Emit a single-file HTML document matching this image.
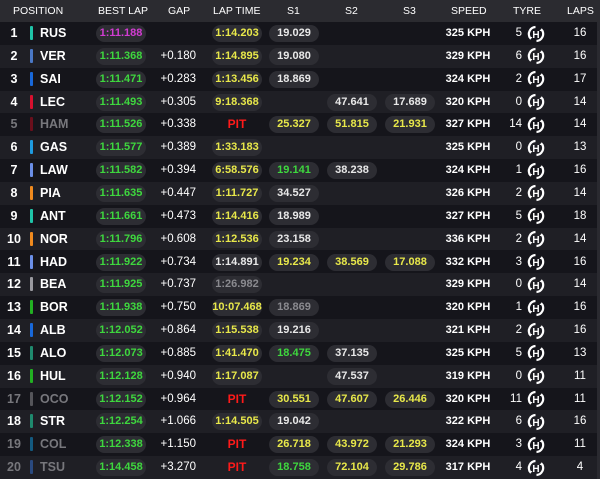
<!DOCTYPE html>
<html><head><meta charset="utf-8"><style>
*{margin:0;padding:0;box-sizing:border-box}
body{width:600px;height:479px;background:#15151b;overflow:hidden;font-family:"Liberation Sans",sans-serif;color:#fff;position:relative}
.h{position:absolute;top:0;left:0;width:600px;height:22px;background:#2b2b30;font-size:10.5px}
.h span{position:absolute;top:5px}
.r{position:absolute;left:0;width:597px;height:22.85px;font-size:11px;font-weight:bold}
.r:nth-child(even){background:#1f1f25}
.r:nth-child(odd){background:#15151b}
.r span{position:absolute;top:5px;line-height:13px}
.p{left:2px;width:24px;text-align:center;font-size:12.5px}
.b{left:30px;top:4px!important;width:3px;height:14px;border-radius:1px}
.c{left:40px;font-size:12.5px}
.pl{height:17px;top:3px!important;line-height:17px!important;width:50px;border-radius:8.5px;background:#2d2d33;text-align:center;font-size:11px}
.bl{left:96px}.lt{left:212px}.s1{left:269px}.s2{left:327px}.s3{left:385px}
.gp{left:148px;width:48px;text-align:right;font-weight:normal;font-size:11.5px}
.sp{left:440px;width:56px;text-align:center}
.ty{left:500px;width:22px;text-align:right;font-weight:normal;font-size:11.5px}
.lp{left:566px;width:28px;text-align:center;font-weight:normal;font-size:11.5px}
.g{color:#3ed73e}.y{color:#e8e84a}.pu{color:#d23cd2}.w{color:#e8e8e8}.gr{color:#8a8a8f}
.pit{color:#ff1a1a;background:none!important;font-size:12px!important}
.d .p,.d .c{color:#77777c}
.sb{position:absolute;right:0;top:22px;width:3px;height:457px;background:#2a2a30}
svg.i{position:absolute;left:527px;top:2.5px}
</style></head><body>
<svg width="0" height="0" style="position:absolute"><defs><symbol id="t" viewBox="0 0 18 18"><path d="M8.5 2A7 7 0 0 0 3 12.8" fill="none" stroke="#fff" stroke-width="2.2"/><path d="M9.5 16A7 7 0 0 0 15 5.2" fill="none" stroke="#fff" stroke-width="2.2"/><path d="M1 11.8l2.2 3 2.3-2.7z M17 6.2l-2.2-3-2.3 2.7z" fill="#fff"/><text x="9" y="12.8" text-anchor="middle" font-family="Liberation Sans" font-weight="bold" font-size="10" fill="#fff">H</text></symbol></defs></svg>
<div class="h"><span style="left:13px">POSITION</span><span style="left:98px">BEST LAP</span><span style="left:168px">GAP</span><span style="left:213px">LAP TIME</span><span style="left:287px">S1</span><span style="left:345px">S2</span><span style="left:403px">S3</span><span style="left:451px">SPEED</span><span style="left:513px">TYRE</span><span style="left:567px">LAPS</span></div>
<div id="rows">
<div class="r" style="top:22px"><span class="p">1</span><span class="b" style="background:#1fc4a8"></span><span class="c">RUS</span><span class="pl bl pu">1:11.188</span><span class="gp"></span><span class="pl lt y">1:14.203</span><span class="pl s1 w">19.029</span><span class="sp">325 KPH</span><span class="ty">5</span><svg class="i" width="18" height="18"><use href="#t"/></svg><span class="lp">16</span></div>
<div class="r" style="top:44.85px"><span class="p">2</span><span class="b" style="background:#4a78c6"></span><span class="c">VER</span><span class="pl bl g">1:11.368</span><span class="gp">+0.180</span><span class="pl lt y">1:14.895</span><span class="pl s1 w">19.080</span><span class="sp">329 KPH</span><span class="ty">6</span><svg class="i" width="18" height="18"><use href="#t"/></svg><span class="lp">16</span></div>
<div class="r" style="top:67.7px"><span class="p">3</span><span class="b" style="background:#1868db"></span><span class="c">SAI</span><span class="pl bl g">1:11.471</span><span class="gp">+0.283</span><span class="pl lt y">1:13.456</span><span class="pl s1 w">18.869</span><span class="sp">324 KPH</span><span class="ty">2</span><svg class="i" width="18" height="18"><use href="#t"/></svg><span class="lp">17</span></div>
<div class="r" style="top:90.55px"><span class="p">4</span><span class="b" style="background:#d8102e"></span><span class="c">LEC</span><span class="pl bl g">1:11.493</span><span class="gp">+0.305</span><span class="pl lt y">9:18.368</span><span class="pl s2 w">47.641</span><span class="pl s3 w">17.689</span><span class="sp">320 KPH</span><span class="ty">0</span><svg class="i" width="18" height="18"><use href="#t"/></svg><span class="lp">14</span></div>
<div class="r d" style="top:113.4px"><span class="p">5</span><span class="b" style="background:#6a0f1c"></span><span class="c">HAM</span><span class="pl bl g">1:11.526</span><span class="gp">+0.338</span><span class="pl lt pit">PIT</span><span class="pl s1 y">25.327</span><span class="pl s2 y">51.815</span><span class="pl s3 y">21.931</span><span class="sp">327 KPH</span><span class="ty">14</span><svg class="i" width="18" height="18"><use href="#t"/></svg><span class="lp">14</span></div>
<div class="r" style="top:136.25px"><span class="p">6</span><span class="b" style="background:#1e9be0"></span><span class="c">GAS</span><span class="pl bl g">1:11.577</span><span class="gp">+0.389</span><span class="pl lt y">1:33.183</span><span class="sp">325 KPH</span><span class="ty">0</span><svg class="i" width="18" height="18"><use href="#t"/></svg><span class="lp">13</span></div>
<div class="r" style="top:159.1px"><span class="p">7</span><span class="b" style="background:#6b8fe8"></span><span class="c">LAW</span><span class="pl bl g">1:11.582</span><span class="gp">+0.394</span><span class="pl lt y">6:58.576</span><span class="pl s1 g">19.141</span><span class="pl s2 w">38.238</span><span class="sp">324 KPH</span><span class="ty">1</span><svg class="i" width="18" height="18"><use href="#t"/></svg><span class="lp">16</span></div>
<div class="r" style="top:181.95px"><span class="p">8</span><span class="b" style="background:#f08a1e"></span><span class="c">PIA</span><span class="pl bl g">1:11.635</span><span class="gp">+0.447</span><span class="pl lt y">1:11.727</span><span class="pl s1 w">34.527</span><span class="sp">326 KPH</span><span class="ty">2</span><svg class="i" width="18" height="18"><use href="#t"/></svg><span class="lp">14</span></div>
<div class="r" style="top:204.8px"><span class="p">9</span><span class="b" style="background:#1fc4a8"></span><span class="c">ANT</span><span class="pl bl g">1:11.661</span><span class="gp">+0.473</span><span class="pl lt y">1:14.416</span><span class="pl s1 w">18.989</span><span class="sp">327 KPH</span><span class="ty">5</span><svg class="i" width="18" height="18"><use href="#t"/></svg><span class="lp">18</span></div>
<div class="r" style="top:227.65px"><span class="p">10</span><span class="b" style="background:#f08a1e"></span><span class="c">NOR</span><span class="pl bl g">1:11.796</span><span class="gp">+0.608</span><span class="pl lt y">1:12.536</span><span class="pl s1 w">23.158</span><span class="sp">336 KPH</span><span class="ty">2</span><svg class="i" width="18" height="18"><use href="#t"/></svg><span class="lp">14</span></div>
<div class="r" style="top:250.5px"><span class="p">11</span><span class="b" style="background:#6b8fe8"></span><span class="c">HAD</span><span class="pl bl g">1:11.922</span><span class="gp">+0.734</span><span class="pl lt w">1:14.891</span><span class="pl s1 y">19.234</span><span class="pl s2 y">38.569</span><span class="pl s3 y">17.088</span><span class="sp">332 KPH</span><span class="ty">3</span><svg class="i" width="18" height="18"><use href="#t"/></svg><span class="lp">16</span></div>
<div class="r" style="top:273.35px"><span class="p">12</span><span class="b" style="background:#9a9aa0"></span><span class="c">BEA</span><span class="pl bl g">1:11.925</span><span class="gp">+0.737</span><span class="pl lt gr">1:26.982</span><span class="sp">329 KPH</span><span class="ty">0</span><svg class="i" width="18" height="18"><use href="#t"/></svg><span class="lp">14</span></div>
<div class="r" style="top:296.2px"><span class="p">13</span><span class="b" style="background:#22b022"></span><span class="c">BOR</span><span class="pl bl g">1:11.938</span><span class="gp">+0.750</span><span class="pl lt y">10:07.468</span><span class="pl s1 gr">18.869</span><span class="sp">320 KPH</span><span class="ty">1</span><svg class="i" width="18" height="18"><use href="#t"/></svg><span class="lp">16</span></div>
<div class="r" style="top:319.05px"><span class="p">14</span><span class="b" style="background:#1868db"></span><span class="c">ALB</span><span class="pl bl g">1:12.052</span><span class="gp">+0.864</span><span class="pl lt y">1:15.538</span><span class="pl s1 w">19.216</span><span class="sp">321 KPH</span><span class="ty">2</span><svg class="i" width="18" height="18"><use href="#t"/></svg><span class="lp">16</span></div>
<div class="r" style="top:341.9px"><span class="p">15</span><span class="b" style="background:#1f8a6e"></span><span class="c">ALO</span><span class="pl bl g">1:12.073</span><span class="gp">+0.885</span><span class="pl lt y">1:41.470</span><span class="pl s1 g">18.475</span><span class="pl s2 w">37.135</span><span class="sp">325 KPH</span><span class="ty">5</span><svg class="i" width="18" height="18"><use href="#t"/></svg><span class="lp">13</span></div>
<div class="r" style="top:364.75px"><span class="p">16</span><span class="b" style="background:#22b022"></span><span class="c">HUL</span><span class="pl bl g">1:12.128</span><span class="gp">+0.940</span><span class="pl lt y">1:17.087</span><span class="pl s2 w">47.537</span><span class="sp">319 KPH</span><span class="ty">0</span><svg class="i" width="18" height="18"><use href="#t"/></svg><span class="lp">11</span></div>
<div class="r d" style="top:387.6px"><span class="p">17</span><span class="b" style="background:#55555a"></span><span class="c">OCO</span><span class="pl bl g">1:12.152</span><span class="gp">+0.964</span><span class="pl lt pit">PIT</span><span class="pl s1 y">30.551</span><span class="pl s2 y">47.607</span><span class="pl s3 y">26.446</span><span class="sp">320 KPH</span><span class="ty">11</span><svg class="i" width="18" height="18"><use href="#t"/></svg><span class="lp">11</span></div>
<div class="r" style="top:410.45px"><span class="p">18</span><span class="b" style="background:#1f8a6e"></span><span class="c">STR</span><span class="pl bl g">1:12.254</span><span class="gp">+1.066</span><span class="pl lt y">1:14.505</span><span class="pl s1 w">19.042</span><span class="sp">322 KPH</span><span class="ty">6</span><svg class="i" width="18" height="18"><use href="#t"/></svg><span class="lp">16</span></div>
<div class="r d" style="top:433.3px"><span class="p">19</span><span class="b" style="background:#135a80"></span><span class="c">COL</span><span class="pl bl g">1:12.338</span><span class="gp">+1.150</span><span class="pl lt pit">PIT</span><span class="pl s1 y">26.718</span><span class="pl s2 y">43.972</span><span class="pl s3 y">21.293</span><span class="sp">324 KPH</span><span class="ty">3</span><svg class="i" width="18" height="18"><use href="#t"/></svg><span class="lp">11</span></div>
<div class="r d" style="top:456.15px"><span class="p">20</span><span class="b" style="background:#2a4a80"></span><span class="c">TSU</span><span class="pl bl g">1:14.458</span><span class="gp">+3.270</span><span class="pl lt pit">PIT</span><span class="pl s1 g">18.758</span><span class="pl s2 y">72.104</span><span class="pl s3 y">29.786</span><span class="sp">317 KPH</span><span class="ty">4</span><svg class="i" width="18" height="18"><use href="#t"/></svg><span class="lp">4</span></div>
</div>
<div class="sb"></div>
</body></html>
